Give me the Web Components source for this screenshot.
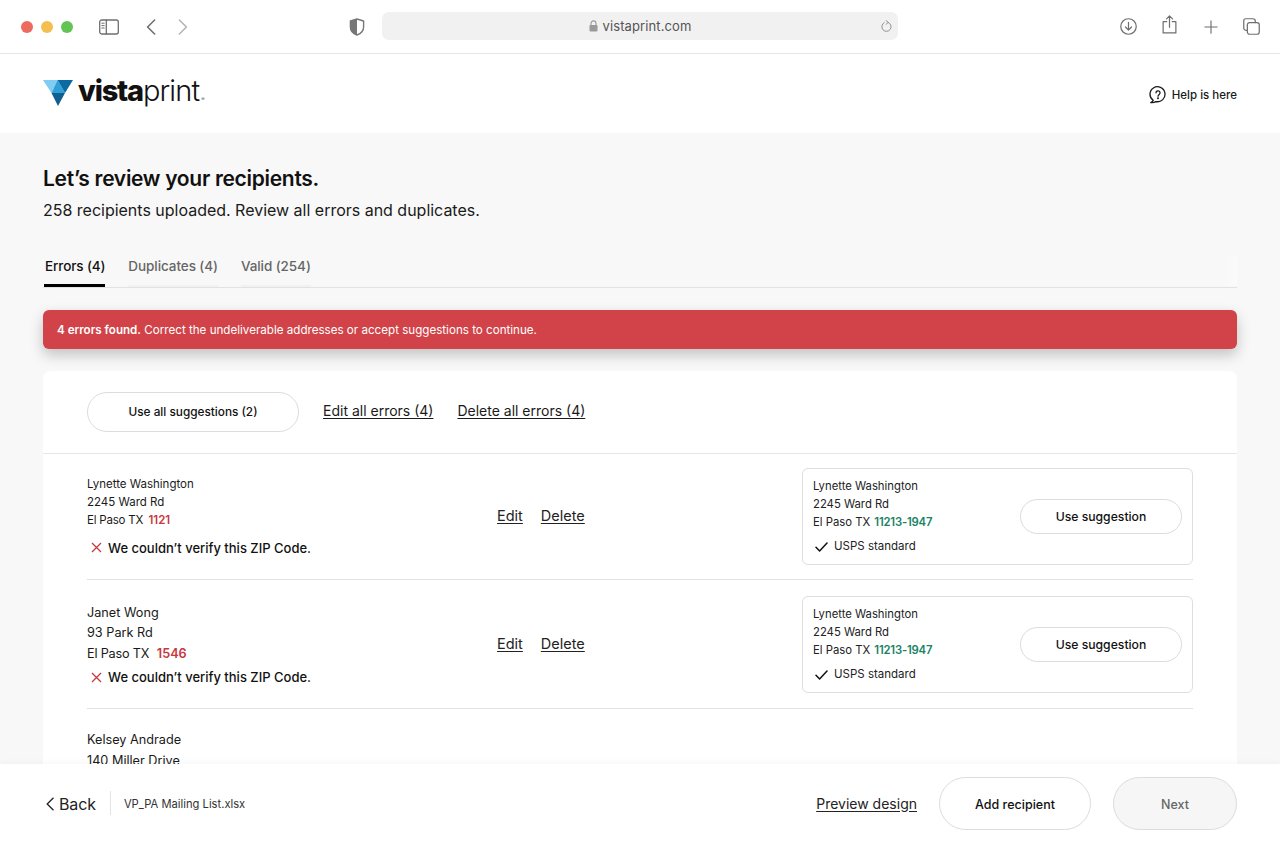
<!DOCTYPE html>
<html lang="en">
<head>
<meta charset="utf-8">
<title>Vistaprint review recipients</title>
<style>
html,body{margin:0;padding:0;height:100%;overflow:hidden}
body{font-family:Inter,"Liberation Sans",sans-serif;color:#1a1a1a;background:#f8f8f8}
review-page{height:844px}
</style>
</head>
<body>
<review-page>
  <safari-bar slot="bar"></safari-bar>
  <site-header slot="head"></site-header>
  <page-title>
    <span slot="title">Let’s review your recipients.</span>
    258 recipients uploaded. Review all errors and duplicates.
  </page-title>
  <review-tabs></review-tabs>
  <error-banner><b>4 errors found.</b> Correct the undeliverable addresses or accept suggestions to continue.</error-banner>
  <recipient-card>
    <card-tools></card-tools>
    <recipient-row name="Lynette Washington" street="2245 Ward Rd" city="El Paso TX" zip="1121" size="s"></recipient-row>
    <recipient-row name="Janet Wong" street="93 Park Rd" city="El Paso TX" zip="1546" size="l"></recipient-row>
    <recipient-row name="Kelsey Andrade" street="140 Miller Drive" city="El Paso TX" zip="" size="l" plain></recipient-row>
  </recipient-card>
  <footer-bar slot="foot"></footer-bar>
</review-page>

<script>
function def(name, html){
  customElements.define(name, class extends HTMLElement{
    constructor(){super();this.attachShadow({mode:'open'})}
    connectedCallback(){
      this.shadowRoot.innerHTML = typeof html==='function'?html(this):html;
    }
  });
}

def('review-page',`<style>
:host{display:flex;flex-direction:column;width:1280px;overflow:hidden}
main{flex:1;min-height:0;overflow:hidden;padding:0 43px}
</style>
<slot name="bar"></slot><slot name="head"></slot>
<main><slot></slot></main>
<slot name="foot"></slot>`);

def('safari-bar',`<style>
:host{display:flex;align-items:center;height:53px;border-bottom:1px solid #e6e6e6;background:#fff;position:relative}
.dots{display:flex;gap:8px;margin-left:21px}
.dots i{width:12px;height:12px;border-radius:50%;display:block}
svg{display:block;fill:none;stroke:#6f6f6f;stroke-width:1.3;stroke-linecap:round;stroke-linejoin:round}
.side{margin-left:26px}
.back{margin-left:27px}
.fwd{margin-left:22px;stroke:#b5b5b5}
.shield{margin-left:161px}
.url{margin-left:17px;width:516px;height:28px;border-radius:7px;background:#f1f1f1;display:flex;align-items:center;justify-content:center;position:relative;font:400 13px Inter,"Liberation Sans",sans-serif;color:#555;gap:5px;top:-1px}
.url span{letter-spacing:.1px}
.reload{position:absolute;right:5px;top:8px}
.right{margin-left:auto;display:flex;align-items:center;margin-right:20px}
</style>
<div class="dots"><i style="background:#ec6a5e"></i><i style="background:#f4bf4f"></i><i style="background:#61c454"></i></div>
<svg class="side" width="20" height="16" viewBox="0 0 20 16"><rect x=".7" y="1" width="18.6" height="14" rx="2"/><path d="M7.3 1v14"/><path d="M2.8 4.2h2.4M2.8 6.6h2.4M2.8 9h2.4" stroke-width="1"/></svg>
<svg class="back" width="10" height="16" viewBox="0 0 10 16" style="stroke-width:1.6"><path d="M8.6 1 1.6 8l7 7"/></svg>
<svg class="fwd" width="10" height="16" viewBox="0 0 10 16" style="stroke-width:1.6"><path d="M1.4 1l7 7-7 7"/></svg>
<svg class="shield" width="16" height="18" viewBox="0 0 16 18"><path d="M8 1 14.6 3v6c0 4-3 6.8-6.600 8C4.400 15.800 1.400 13 1.400 9V3z" stroke="#777" stroke-width="1.400"/><path d="M8 1 1.400 3v6c0 4 3 6.800 6.600 8z" fill="#777" stroke="none"/></svg>
<div class="url">
  <svg width="9" height="12" viewBox="0 0 9 12" style="stroke:none"><path d="M2 5V3.400a2.500 2.500 0 0 1 5 0V5" fill="none" stroke="#9a9a9a" stroke-width="1.100"/><rect x=".5" y="5" width="8" height="6.500" rx="1.200" fill="#9a9a9a"/></svg>
  <span>vistaprint.com</span>
  <svg class="reload" width="13" height="13" viewBox="0 0 14 14" style="stroke-width:1;stroke:#888"><path d="M8.700 2.500A5 5 0 1 1 4.500 2.800"/><path d="M6.500 .6 8.800 2.500 6.800 4.600"/></svg>
</div>
<div class="right">
  <svg width="17" height="17" viewBox="0 0 18 18"><circle cx="9" cy="9" r="8.200"/><path d="M9 4.600v8M5.800 9.500 9 12.800l3.200-3.300"/></svg>
  <svg width="15" height="19" viewBox="0 0 16 20" style="margin-left:25px;margin-top:-4px"><path d="M5 7H1.200v12h13.600V7H11"/><path d="M8 13V1M4.800 4 8 .8 11.200 4"/></svg>
  <svg width="14" height="14" viewBox="0 0 16 16" style="margin-left:27px"><path d="M8 1v14M1 8h14"/></svg>
  <svg width="17" height="17" viewBox="0 0 18 18" style="margin-left:25px"><rect x="4.600" y="4.800" width="12.600" height="12.400" rx="2.400"/><path d="M4.600 13H3a2.200 2.200 0 0 1-2.200-2.200V3A2.200 2.200 0 0 1 3 .8h7.600A2.400 2.400 0 0 1 13 3.200v1.600"/></svg>
</div>`);

def('site-header',`<style>
:host{display:flex;align-items:center;justify-content:space-between;height:79px;background:#fff;padding:0 43px}
.logo{display:flex;align-items:center;gap:5px;height:34px;margin-top:-1px}
.word{font:400 29px/34px Inter,"Liberation Sans",sans-serif;color:#111;display:flex;align-items:baseline;margin-top:3px}
.word b{font-weight:800;letter-spacing:-1.200px}
.word span{font-weight:300;letter-spacing:-.9px}
.word small{font-size:5px;margin-left:2px;color:#555;letter-spacing:0}
.help{display:flex;align-items:center;gap:5px;font:500 11.500px Inter,"Liberation Sans",sans-serif;color:#1a1a1a;margin-top:2px}
</style>
<div class="logo">
<svg width="30" height="26" viewBox="0 0 30 26"><polygon points="0,0 14.500,0 8.500,13" fill="#7fcdf0"/><polygon points="14.500,0 22,13 8.500,13" fill="#2f9fd8"/><polygon points="14.500,0 30,0 22,13" fill="#0a6ba3"/><polygon points="8.500,13 22,13 15,26" fill="#0f5f90"/></svg>
<div class="word"><b>vista</b><span>print</span><small>®</small></div>
</div>
<div class="help">
<svg width="18" height="18" viewBox="0 0 18 18" fill="none" stroke="#1a1a1a" stroke-width="1.300" stroke-linecap="round" stroke-linejoin="round"><path d="M4.200 14.400A7.500 7.500 0 1 1 7 15.600C5.500 16.500 3.500 16.800 1.800 16.600 3 16 4 15.300 4.200 14.400z"/><path d="M7 6.800a2 2 0 1 1 3.200 1.600C9.400 9 9 9.400 9 10.200"/><circle cx="9" cy="12.300" r=".4" fill="#1a1a1a"/></svg>
<span>Help is here</span>
</div>`);

def('page-title',`<style>
:host{display:block;padding-top:33px}
h1{margin:0;font:600 21px/25px Inter,"Liberation Sans",sans-serif;letter-spacing:-.3px;color:#111}
p{margin:8px 0 0;font:400 16px/22px Inter,"Liberation Sans",sans-serif;color:#1a1a1a;letter-spacing:-.01px}
</style><h1><slot name="title"></slot></h1><p><slot></slot></p>`);

def('review-tabs',`<style>
:host{display:flex;height:31px;margin-top:35px;border-bottom:1px solid #e2e2e2;position:relative;gap:23px;font:500 13.500px/20px Inter,"Liberation Sans",sans-serif;color:#666;letter-spacing:-.08px}
.t{height:29px;border-bottom:2px solid #f1f1f1;white-space:nowrap}
.t.on{color:#111;border-bottom:3px solid #000;height:28px;padding-left:1px;margin-left:1px;letter-spacing:-.12px}
.fade{position:absolute;right:0;top:0;width:12px;height:30px;background:linear-gradient(90deg,#f8f8f8,#fbfbfb)}
</style>
<div class="t on">Errors (4)</div><div class="t">Duplicates (4)</div><div class="t">Valid (254)</div><div class="fade"></div>`);

def('error-banner',`<style>
:host{display:block;margin-top:22px;height:39px;background:#d14348;border-radius:6px;box-shadow:0 6px 14px rgba(0,0,0,.22);color:#fff;padding-left:14px;font:400 11.620px/40px Inter,"Liberation Sans",sans-serif}
::slotted(b){font-weight:600}
</style><slot></slot>`);

def('recipient-card',`<style>
:host{display:block;margin-top:22px;background:#fff;border-radius:8px 8px 0 0}
</style><slot></slot>`);

def('pill-button',`<style>
:host{display:inline-flex;align-items:center;justify-content:center;box-sizing:border-box;border:1px solid #dcdcdc;border-radius:999px;background:#fff;font:500 12.200px Inter,"Liberation Sans",sans-serif;color:#111;white-space:nowrap}
</style><slot></slot>`);

def('card-tools',`<style>
:host{display:flex;align-items:center;height:82px;padding-left:44px;border-bottom:1px solid #e6e6e6}
pill-button{width:212px;height:40px;font-size:11.800px}
a{font:400 14px Inter,"Liberation Sans",sans-serif;color:#1a1a1a;text-decoration:underline;text-underline-offset:2px;margin:0 0 3px 24px}
</style>
<pill-button>Use all suggestions (2)</pill-button><a>Edit all errors (4)</a><a>Delete all errors (4)</a>`);

def('suggestion-box',`<style>
:host{display:flex;align-items:center;justify-content:space-between;box-sizing:border-box;width:391px;height:97px;border:1px solid #dedede;border-radius:6px;padding:0 10px;background:#fff}
.a{font:400 11.300px/17.800px Inter,"Liberation Sans",sans-serif;color:#222;padding-top:1px}
.z{font-weight:600;color:#1a8265;margin-left:1px;letter-spacing:-.2px}
.ok{display:flex;align-items:center;gap:6px;margin:6px 0 0 2px;color:#222;font-size:11.500px}
pill-button{width:162px;height:35px}
</style>
<div class="a">Lynette Washington<br>2245 Ward Rd<br>El Paso TX <span class="z">11213-1947</span>
<div class="ok"><svg width="13" height="10" viewBox="0 0 13 10" fill="none" stroke="#111" stroke-width="1.500" stroke-linecap="round" stroke-linejoin="round"><path d="M1 5.200 4.600 9 12 1"/></svg>USPS standard</div></div>
<pill-button>Use suggestion</pill-button>`);

def('recipient-row',el=>{
  const s=el.getAttribute('size')==='s', plain=el.hasAttribute('plain');
  return `<style>
:host{display:grid;grid-template-columns:410px 1fr 391px;align-items:center;margin:0 44px;padding:${s?'14px 0':'16px 0 15px'};${plain?'':'border-bottom:1px solid #e3e3e3;'}}
:host([plain]){align-items:start;padding-top:21px}
.l{font:400 ${s?'11.500px/18px':'12.700px/20.500px'} Inter,"Liberation Sans",sans-serif;color:#1a1a1a;${s?'margin-top:-2px;':''}}
.city{letter-spacing:-.2px}
.z{font-weight:600;color:#c8383f;margin-left:${s?'2':'4'}px}
.err{display:flex;align-items:center;gap:6px;margin:${s?'10px':'4px'} 0 0 4px;font:500 13px/18px Inter,"Liberation Sans",sans-serif;color:#111}
.act{display:flex;gap:18px;font:400 14.500px Inter,"Liberation Sans",sans-serif;color:#222;margin-bottom:2px}
.act span{text-decoration:underline;text-underline-offset:2px}
</style>
<div class="l">${el.getAttribute('name')}<br>${el.getAttribute('street')}<br><span class="city">${el.getAttribute('city')}</span> ${el.getAttribute('zip')?`<span class="z">${el.getAttribute('zip')}</span>`:''}
${plain?'':`<div class="err"><svg width="11" height="11" viewBox="0 0 11 11" fill="none" stroke="#c8383f" stroke-width="1.300"><path d="M1 1l9 9M10 1l-9 9"/></svg>We couldn’t verify this ZIP Code.</div>`}</div>
${plain?'':`<div class="act"><span>Edit</span><span>Delete</span></div><suggestion-box></suggestion-box>`}`;
});

def('footer-bar',`<style>
:host{display:flex;align-items:center;height:78px;background:#fff;padding:0 43px 2px 46px;box-shadow:0 -2px 6px rgba(0,0,0,.03);position:relative;flex:none}
.b{display:flex;align-items:center;gap:5px;font:400 16px Inter,"Liberation Sans",sans-serif;color:#222;letter-spacing:-.12px;padding-top:2px}
svg{display:block}
.sep{width:1px;height:24px;background:#e3e3e3;margin:0 13px 0 14px}
.f{font:400 11.200px Inter,"Liberation Sans",sans-serif;color:#333;padding-top:2px}
.p{margin-left:auto;font:400 14px Inter,"Liberation Sans",sans-serif;color:#222;text-decoration:underline;text-underline-offset:2px}
pill-button{height:53px;font-size:12.500px;padding-top:2px}
.add{width:152px;margin-left:22px}
.next{width:124px;margin-left:22px;background:#f6f6f6;color:#666}
</style>
<div class="b"><svg width="8" height="14" viewBox="0 0 8 14" fill="none" stroke="#222" stroke-width="1.300"><path d="M7.500 .8 1.200 7l6.300 6.200"/></svg>Back</div>
<div class="sep"></div><div class="f">VP_PA Mailing List.xlsx</div>
<a class="p">Preview design</a>
<pill-button class="add">Add recipient</pill-button><pill-button class="next">Next</pill-button>`);
</script>
</body>
</html>
